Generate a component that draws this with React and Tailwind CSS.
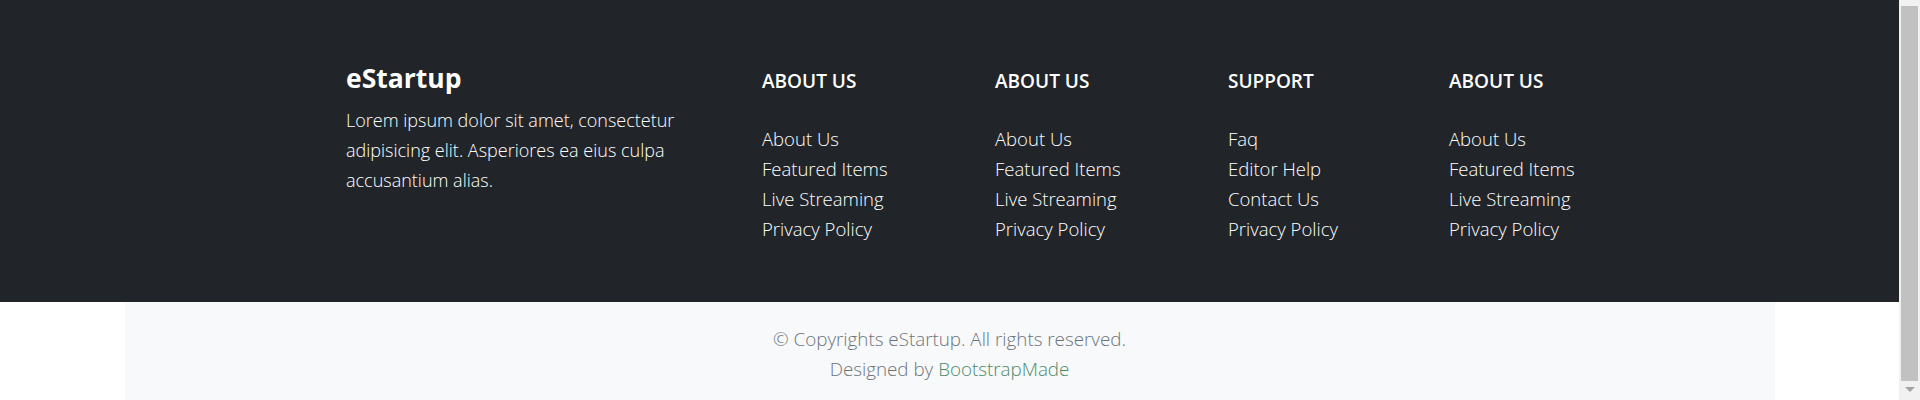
import React from 'react'

const columns = [
  { title: 'ABOUT US', links: ['About Us', 'Featured Items', 'Live Streaming', 'Privacy Policy'], width: 'w-[233px]' },
  { title: 'ABOUT US', links: ['About Us', 'Featured Items', 'Live Streaming', 'Privacy Policy'], width: 'w-[233px]' },
  { title: 'SUPPORT', links: ['Faq', 'Editor Help', 'Contact Us', 'Privacy Policy'], width: 'w-[221px]' },
  { title: 'ABOUT US', links: ['About Us', 'Featured Items', 'Live Streaming', 'Privacy Policy'], width: 'w-[200px]' },
]

function LinkColumn({ title, links, width }) {
  return (
    <div className={`${width} shrink-0 pt-[7px] whitespace-nowrap`}>
      <h4 className="text-[19px] font-semibold leading-[24px] text-white">{title}</h4>
      <ul className="mt-[31px]">
        {links.map((link, i) => (
          <li key={i} className="text-[18.5px] font-light leading-[30px] text-white">
            <a href="#">{link}</a>
          </li>
        ))}
      </ul>
    </div>
  )
}

function Scrollbar() {
  return (
    <div className="w-[21px] bg-[#f1f1f1] flex flex-col items-center">
      <div className="mt-[6px] w-[17px] h-[375px] bg-[#c1c1c1]" />
      <svg width="10" height="6" viewBox="0 0 10 6" className="mt-[6px]">
        <path d="M0 0 L10 0 L5 5 Z" fill="#a3a3a3" />
      </svg>
    </div>
  )
}

export default function App() {
  return (
    <div className="flex h-[400px] overflow-hidden bg-white" style={{ fontFamily: '"Open Sans", "Noto Sans", sans-serif' }}>
      <div className="flex-1 flex flex-col">
        <footer className="h-[302px] bg-[#212529] shrink-0">
          <div className="w-[1207px] mx-auto flex pt-[62px]">
            <div className="w-[416px] shrink-0">
              <h3 className="text-[26.5px] font-bold leading-[32px] text-white">eStartup</h3>
              <p className="mt-[11px] w-[345px] text-[18px] font-light leading-[30px] text-white">
                Lorem ipsum dolor sit amet, consectetur adipisicing elit. Asperiores ea eius culpa accusantium alias.
              </p>
            </div>
            {columns.map((col, i) => (
              <LinkColumn key={i} {...col} />
            ))}
          </div>
        </footer>
        <div className="w-[1650px] mx-auto flex-1 bg-[#f8f9fa] pt-[22px] text-center text-[18.8px] font-light leading-[30px] text-[#6c757d]">
          <p>© Copyrights eStartup. All rights reserved.</p>
          <p>
            Designed by <a href="#" className="text-[#4b8a69]">BootstrapMade</a>
          </p>
        </div>
      </div>
      <Scrollbar />
    </div>
  )
}
